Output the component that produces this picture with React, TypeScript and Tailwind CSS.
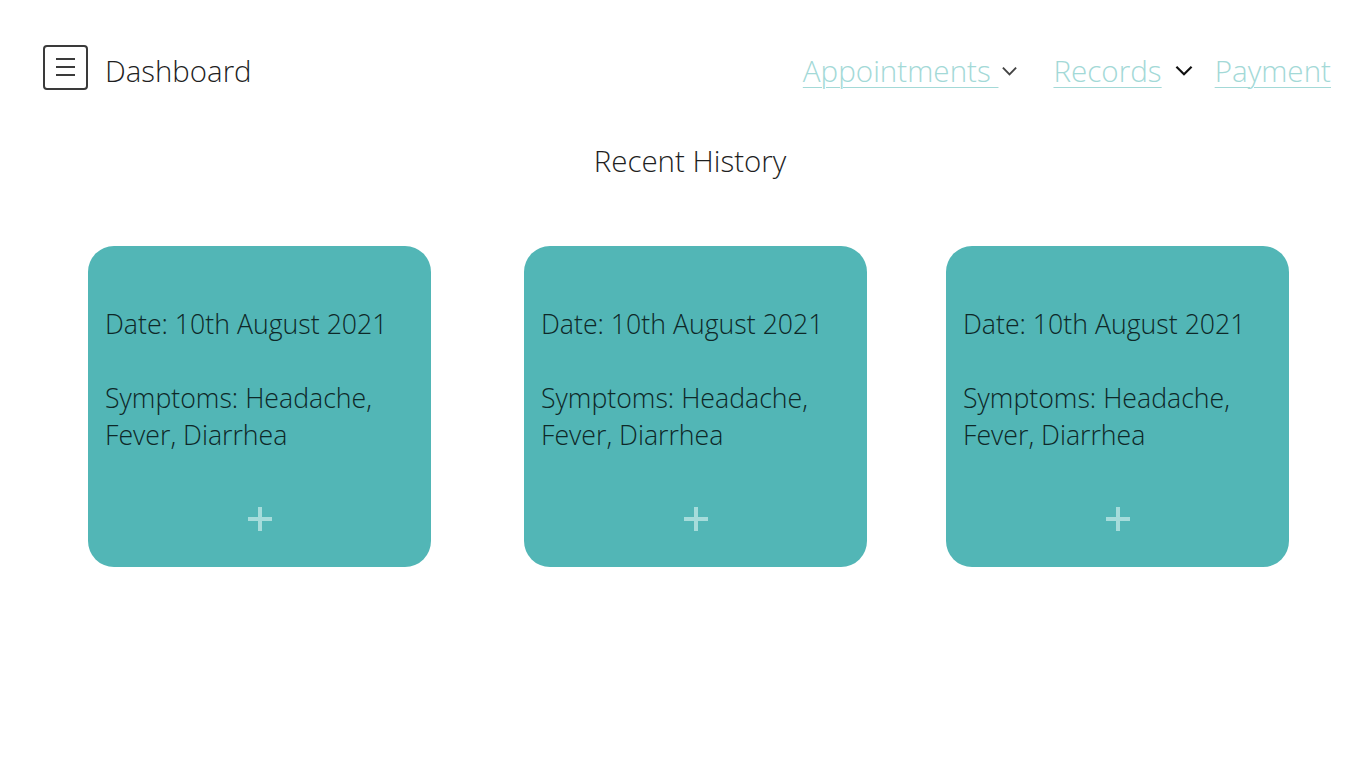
import { Fragment } from "react";

type Visit = {
  id: number;
  date: string;
  symptoms: string[];
};

const visits: Visit[] = [
  { id: 1, date: "10th August 2021", symptoms: ["Headache", "Fever", "Diarrhea"] },
  { id: 2, date: "10th August 2021", symptoms: ["Headache", "Fever", "Diarrhea"] },
  { id: 3, date: "10th August 2021", symptoms: ["Headache", "Fever", "Diarrhea"] },
];

const Chevron = ({ className }: { className: string }) => (
  <svg viewBox="0 0 18 12" className={className} fill="none" stroke="currentColor" strokeWidth={2}>
    <path d="M2 2.5 L9 9.5 L16 2.5" />
  </svg>
);

const MenuIcon = () => (
  <div className="flex h-[45px] w-[45px] flex-col items-center justify-center gap-[6px] rounded-[4px] border-2 border-[#3a3a3a]">
    <span className="h-[2px] w-[19px] bg-[#3a3a3a]" />
    <span className="h-[2px] w-[19px] bg-[#3a3a3a]" />
    <span className="h-[2px] w-[19px] bg-[#3a3a3a]" />
  </div>
);

const HistoryCard = ({ visit }: { visit: Visit }) => {
  return (
    <article className="flex h-[321px] w-[343px] shrink-0 flex-col rounded-[26px] bg-[#52b6b6] px-[17px] pb-[36px] pt-[59px] text-[26.7px] leading-[37px] text-[#0e2828]">
      <p>Date: {visit.date}</p>
      <p className="mt-[37px]">
        Symptoms:{" "}
        {visit.symptoms.map((s, i) => (
          <Fragment key={s}>
            {s}
            {i < visit.symptoms.length - 1 ? ", " : ""}
          </Fragment>
        ))}
      </p>
      <button className="mt-auto flex h-[24px] w-full items-center justify-center" aria-label="Add details">
        <svg viewBox="0 0 24 24" className="h-[24px] w-[24px]" stroke="#a6dcdb" strokeWidth={4}>
          <path d="M12 0 V24 M0 12 H24" />
        </svg>
      </button>
    </article>
  );
};

export default function App() {
  return (
    <div className="min-h-screen bg-white font-['Open_Sans',sans-serif] font-light text-[#1f1f1f]">
      <header className="flex items-center justify-between pl-[43px] pr-[35px] pt-[43px]">
        <div className="flex items-center gap-[17px]">
          <MenuIcon />
          <h1 className="mt-[8px] text-[29.4px] leading-[40px]">Dashboard</h1>
        </div>
        <nav className="mt-[7px] flex items-center text-[29.6px] leading-[40px] text-[#a3d9d7]">
          <a href="#" className="whitespace-pre underline decoration-1 underline-offset-[5px]">
            {"Appointments "}
          </a>
          <Chevron className="ml-[3px] h-[12px] w-[17px] text-[#444]" />
          <a href="#" className="ml-[35px] underline decoration-1 underline-offset-[5px]">
            Records
          </a>
          <Chevron className="ml-[12px] h-[13px] w-[20px] text-[#111]" />
          <a href="#" className="ml-[21px] underline decoration-1 underline-offset-[5px]">
            Payment
          </a>
        </nav>
      </header>

      <h2 className="mt-[50px] pl-[14px] text-center text-[29.5px] leading-[40px]">Recent History</h2>

      <section className="mt-[65px] flex pl-[88px]">
        <HistoryCard visit={visits[0]} />
        <div className="ml-[93px]">
          <HistoryCard visit={visits[1]} />
        </div>
        <div className="ml-[79px]">
          <HistoryCard visit={visits[2]} />
        </div>
      </section>
    </div>
  );
}
